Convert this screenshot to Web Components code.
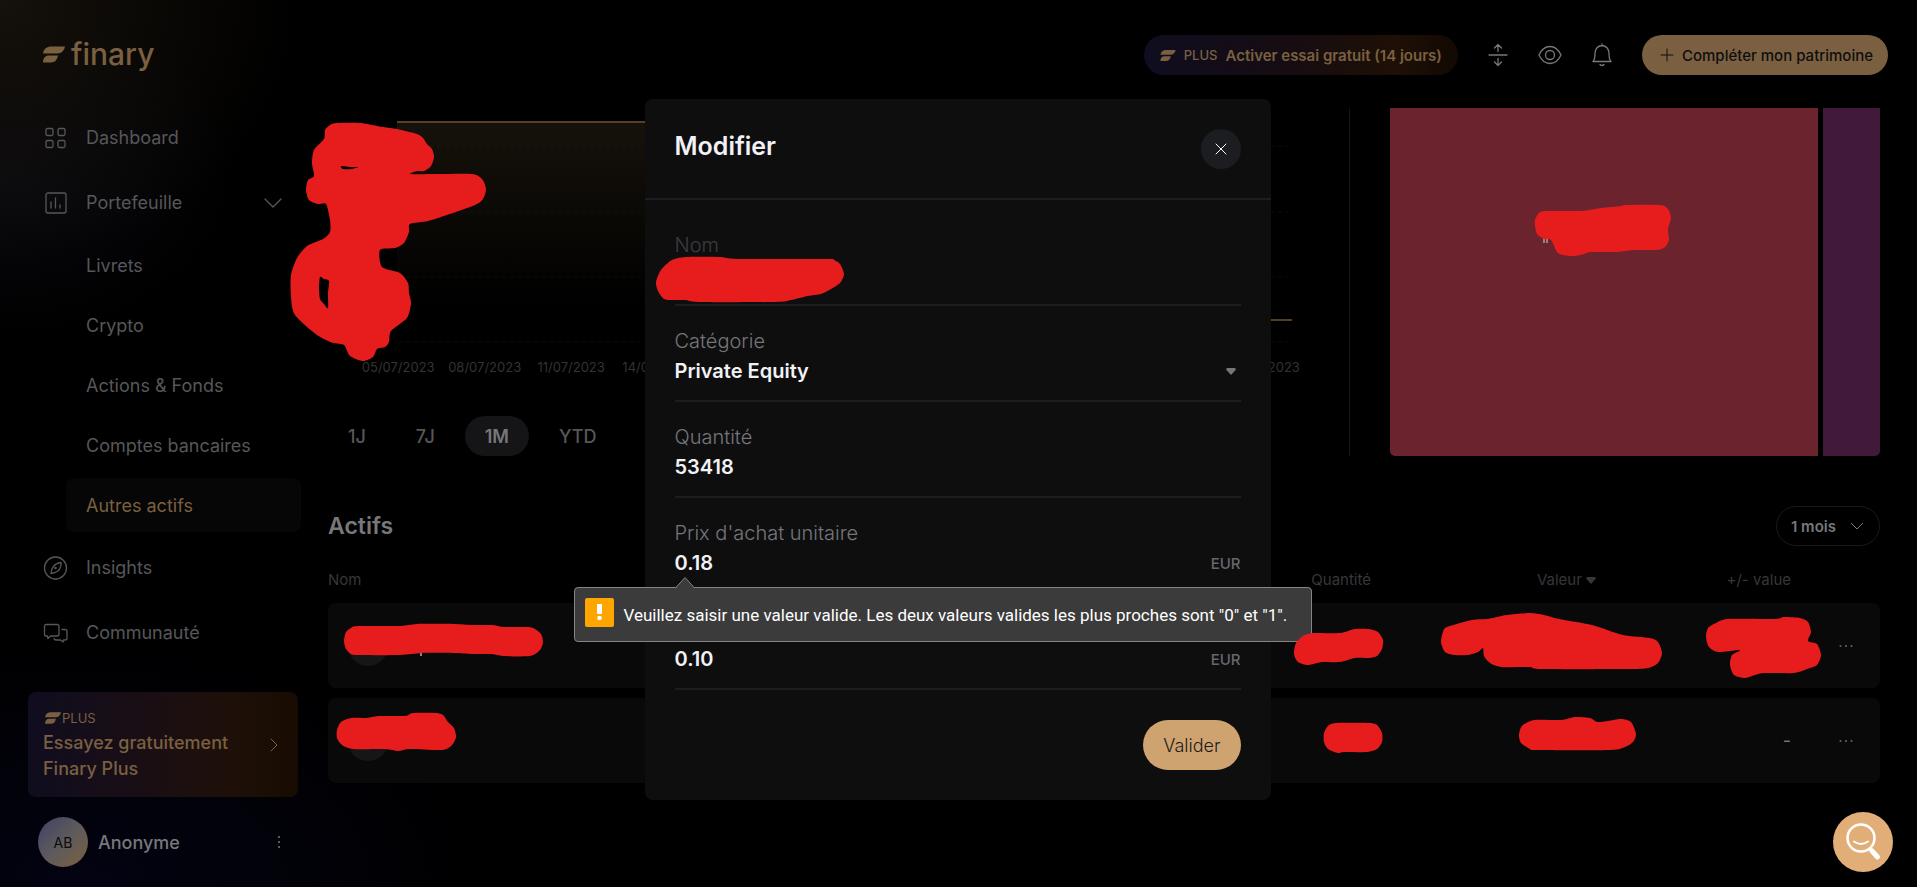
<!DOCTYPE html>
<html lang="fr">
<head>
<meta charset="utf-8">
<meta name="viewport" content="width=device-width, initial-scale=1">
<title>Finary</title>
<style>
  body {
    margin: 0;
    background: #000;
    color: #56575a;
    font-family: Inter, "Liberation Sans", sans-serif;
    font-size: 18px;
  }
</style>
</head>
<body>
<finary-app></finary-app>

<script>
const FLAG = `<path d="M7 0h15q-1 6.500-8 7H0Q1 .5 7 0z"/><path d="M5 9h10q-1 6.500-7 7H0q0-6 5-7z"/>`;

// shared base: one shadow root per element, filled from render()
class BaseElement extends HTMLElement {
  constructor() {
    super();
    this.shadowDOM = this.attachShadow({ mode: "open" });
  }

  connectedCallback() {
    this.shadowDOM.innerHTML = `
    <style>
    * { box-sizing: border-box; }
    button, input, select {
      font: inherit;
      color: inherit;
      background: none;
      border: 0;
      padding: 0;
      margin: 0;
    }
    button { cursor: pointer; }
    a { color: inherit; text-decoration: none; }
    svg { display: block; flex: none; }
    .line { fill: none; stroke: currentColor; stroke-linecap: round; stroke-linejoin: round; }
    </style>
    ${this.render()}`;
  }
}

class NavItem extends BaseElement {
  render() {
    return `
    <style>
    :host { display: block; }
    a {
      display: flex;
      align-items: center;
      gap: 18px;
      height: 59px;
      padding: 0 19px 0 14px;
    }
    :host([sub]) a {
      height: 54px;
      margin-left: 38px;
      padding: 0 20px;
      border-radius: 8px;
    }
    :host([active]) a { background: #060606; color: #7a6040; }
    .label { flex: 1; }
    </style>
    <a href="#"><slot name="icon"></slot><span class="label"><slot></slot></span><slot name="end"></slot></a>`;
  }
}

class PlusCard extends BaseElement {
  render() {
    return `
    <style>
    :host { display: block; margin: 30px 6px 0 0; }
    a {
      display: flex;
      align-items: center;
      justify-content: space-between;
      height: 105px;
      padding: 0 20px 0 15px;
      border-radius: 8px;
      color: #7a6040;
      background: linear-gradient(90deg, #100d1f, #1a0e14 45%, #1e1008 75%, #180c02);
    }
    .tag { display: flex; align-items: center; gap: 1px; margin: 2px 0 4px 2px; font-size: 13px; line-height: 16px; }
    .title { font-size: 18px; line-height: 26px; font-weight: 500; }
    </style>
    <a href="#">
      <div>
        <div class="tag"><svg width="16" height="12" viewBox="0 0 22 16" fill="currentColor">${FLAG}</svg>PLUS</div>
        <div class="title">Essayez gratuitement<br>Finary Plus</div>
      </div>
      <svg class="line" width="8" height="14"><path d="M1 1l6 6-6 6"/></svg>
    </a>`;
  }
}

class UserBadge extends BaseElement {
  render() {
    return `
    <style>
    :host { display: flex; align-items: center; gap: 10px; margin: 20px 21px 0 10px; }
    .avatar {
      display: grid;
      place-items: center;
      width: 50px;
      height: 50px;
      border-radius: 50%;
      color: #0b0b0e;
      font-size: 14px;
      background: linear-gradient(135deg, #3c4266, #5e5a5c 50%, #7a6040);
    }
    .name { flex: 1; font-weight: 500; color: #77787b; }
    button { width: 8px; }
    </style>
    <span class="avatar">AB</span>
    <span class="name">Anonyme</span>
    <button aria-label="Menu du compte"><svg width="8" height="14" fill="#77787b"><circle cx="4" cy="2" r="1"/><circle cx="4" cy="7" r="1"/><circle cx="4" cy="12" r="1"/></svg></button>`;
  }
}

class SideBar extends BaseElement {
  render() {
    return `
    <style>
    :host { display: block; padding: 0 0 16px 28px; }
    .logo {
      display: flex;
      align-items: center;
      gap: 6px;
      height: 108px;
      padding: 0 0 0 15px;
      color: #7a6040;
      font-size: 30px;
      font-weight: 500;
    }
    nav { display: flex; flex-direction: column; gap: 6px; margin-right: 3px; }
    nav .line { stroke-width: 1.300; }
    </style>
    <a class="logo" href="#"><svg width="22" height="17" viewBox="0 0 22 16" fill="currentColor">${FLAG}</svg>finary</a>
    <nav>
      <nav-item><svg class="line" slot="icon" width="26" height="24"><rect x="4" y="2.500" width="7" height="7" rx="1.500"/><rect x="16" y="2.500" width="7" height="7" rx="1.500"/><rect x="4" y="14.500" width="7" height="7" rx="1.500"/><rect x="16" y="14.500" width="7" height="7" rx="1.500"/></svg>Dashboard</nav-item>
      <nav-item><svg class="line" slot="icon" width="26" height="24"><rect x="4" y="2" width="20" height="20" rx="2"/><path d="M9 11v6M13.500 7v10M18 14v3"/></svg>Portefeuille<svg class="line" slot="end" width="18" height="10"><path d="M1 1l8 8 8-8"/></svg></nav-item>
      <nav-item sub>Livrets</nav-item>
      <nav-item sub>Crypto</nav-item>
      <nav-item sub>Actions &amp; Fonds</nav-item>
      <nav-item sub>Comptes bancaires</nav-item>
      <nav-item sub active>Autres actifs</nav-item>
      <nav-item><svg class="line" slot="icon" width="26" height="24"><circle cx="13.500" cy="12" r="11"/><path d="M19 6.500q.5 5-3 8.500-3 2-7 2.500.3-4.500 2.800-7.500T19 6.500z"/><circle cx="13.500" cy="12" r=".6"/></svg>Insights</nav-item>
      <nav-item><svg class="line" slot="icon" width="26" height="24"><path d="M4 3.500h11q2 0 2 2V13q0 2-2 2H8.500L6 17.500 5.500 15H4q-1.500 0-1.500-2V5.500q0-2 1.500-2z"/><path d="M20 8.500h3q2 0 2 2V17q0 2-2 2h-1.500l-.5 2-2.500-2H14q-1.500 0-2-1.500"/></svg>Communauté</nav-item>
    </nav>
    <plus-card></plus-card>
    <user-badge></user-badge>`;
  }
}

class TopBar extends BaseElement {
  render() {
    return `
    <style>
    :host {
      display: flex;
      align-items: center;
      justify-content: flex-end;
      height: 110px;
      margin-bottom: -2px;
      font-size: 15px;
      font-weight: 500;
    }
    .pill { display: flex; align-items: center; height: 40px; border-radius: 20px; }
    .trial {
      gap: 8px;
      padding: 0 16px;
      margin-right: 28px;
      color: #7a6040;
      background: linear-gradient(90deg, #0f0d20, #160c12 45%, #1e1006 80%, #120903);
      font-weight: 600;
    }
    .trial small { font-size: 13px; font-weight: 500; }
    .icons { display: flex; gap: 28px; margin-right: 28px; color: #77787b; }
    .icons svg { stroke-width: 1.300; }
    .add { gap: 8px; padding: 0 15px 0 18px; background: #7a6040; color: #0e0e10; }
    </style>
    <button class="pill trial"><svg width="16" height="11" viewBox="0 0 22 16" fill="currentColor">${FLAG}</svg><small>PLUS</small>Activer essai gratuit (14 jours)</button>
    <div class="icons">
      <button aria-label="Réduire"><svg class="line" width="24" height="24"><path d="M3 12h18M12 1.500v7M8.500 5L12 1.500 15.500 5M12 15.500v7M8.500 19l3.500 3.500 3.500-3.500"/></svg></button>
      <button aria-label="Masquer les montants"><svg class="line" width="24" height="24"><path d="M1 12Q5 3.500 12 3.500T23 12q-4 8.500-11 8.500T1 12z"/><circle cx="12" cy="12" r="4.500"/></svg></button>
      <button aria-label="Notifications"><svg class="line" width="24" height="24"><path d="M3 18.500q2-2 2-8 .5-7.500 7-8 6.500.5 7 8 0 6 2 8zM10 21.500q2 2 4 0M12 1v1.500"/></svg></button>
    </div>
    <button class="pill add"><svg class="line" width="14" height="14"><path d="M7 1v12M1 7h12"/></svg>Compléter mon patrimoine</button>`;
  }
}

class HistoryChart extends BaseElement {
  render() {
    const dates = ["05/07/2023", "08/07/2023", "11/07/2023", "14/07/2023", "17/07/2023", "20/07/2023", "23/07/2023", "26/07/2023", "29/07/2023", "01/08/2023", "04/08/2023"];
    const ranges = ["1J", "7J", "1M", "YTD"];
    return `
    <style>
    :host { display: flex; flex-direction: column; height: 348px; }
    .plot { display: block; width: 100%; height: 244px; }
    .dates {
      display: flex;
      padding: 7px 0 0 27px;
      margin-right: -14px;
      font-size: 13px;
      line-height: 16px;
      text-align: center;
      color: #323335;
    }
    .dates span { flex: 1; }
    .ranges { display: flex; gap: 10px; margin-top: auto; font-weight: 500; }
    .ranges button { height: 40px; padding: 0 20px; border-radius: 20px; }
    .ranges .on { background: #151517; color: #77787b; font-weight: 600; }
    </style>
    <svg class="plot" viewBox="0 0 964 244" preserveAspectRatio="none">
      <defs><linearGradient id="fade" x2="0" y2="1"><stop stop-color="#16120b"/><stop offset=".8" stop-color="#000"/></linearGradient></defs>
      <path fill="url(#fade)" d="M69 14h600v198h295v32H69z"/>
      <path d="M69 38h895M69 104h895M69 169h895M69 234h895" stroke="#fff" stroke-opacity=".04" stroke-dasharray="4 4"/>
      <path d="M69 14h600v198h295" fill="none" stroke="#544024" stroke-width="2"/>
    </svg>
    <div class="dates">${dates.map((d) => `<span>${d}</span>`).join("")}</div>
    <div class="ranges">${ranges.map((r) => `<button${r === "1M" ? ' class="on"' : ""}>${r}</button>`).join("")}</div>`;
  }
}

class TreeMap extends BaseElement {
  render() {
    return `
    <style>
    :host { display: block; }
    .tiles { display: flex; gap: 5px; height: 348px; border-radius: 0 0 5px 5px; overflow: hidden; }
    .red { flex: 1; background: #6b232e; }
    .purple { flex: 0 0 57px; background: #41193b; }
    </style>
    <div class="tiles"><div class="red"></div><div class="purple"></div></div>`;
  }
}

class AssetTable extends BaseElement {
  render() {
    const row = (gain) => `
      <tr>
        <td><span class="avatar"></span></td><td></td><td></td><td>${gain}</td>
        <td><button aria-label="Options"><svg width="14" height="4" fill="#66676a"><circle cx="1.500" cy="2" r="1"/><circle cx="7" cy="2" r="1"/><circle cx="12.500" cy="2" r="1"/></svg></button></td>
      </tr>`;
    return `
    <style>
    :host { display: block; margin-top: 50px; }
    header { display: flex; align-items: center; justify-content: space-between; height: 40px; }
    h2 { margin: 0; font-size: 23px; font-weight: 600; color: #77787b; }
    .period { position: relative; display: flex; align-items: center; color: #77787b; }
    select {
      appearance: none;
      width: 104px;
      height: 40px;
      padding: 0 14px;
      border: 1px solid #1a1a1b;
      border-radius: 20px;
      font-size: 15px;
      font-weight: 600;
    }
    .period svg { position: absolute; right: 17px; pointer-events: none; }
    table {
      width: 100%;
      margin-top: 10px;
      border-collapse: separate;
      border-spacing: 0 10px;
      table-layout: fixed;
    }
    th {
      height: 27px;
      padding: 0;
      font-size: 15px;
      font-weight: 400;
      text-align: right;
      color: #36373a;
    }
    th:first-child, td:first-child { text-align: left; }
    th svg { display: inline-block; vertical-align: 1px; }
    td { height: 85px; padding: 0; text-align: right; background: #090909; color: #77787b; }
    td:first-child { border-radius: 8px 0 0 8px; padding-left: 20px; }
    td:last-child { border-radius: 0 8px 8px 0; padding-right: 27px; }
    td button svg { margin-bottom: 4px; }
    .avatar { display: block; width: 40px; height: 40px; border-radius: 50%; background: #141618; }
    </style>
    <header>
      <h2>Actifs</h2>
      <div class="period">
        <select aria-label="Période"><option>1 mois</option></select>
        <svg class="line" width="12" height="8"><path d="M0 1l6 6 6-6"/></svg>
      </div>
    </header>
    <table>
      <colgroup><col><col style="width:200px"><col style="width:225px"><col style="width:195px"><col style="width:89px"></colgroup>
      <thead><tr><th>Nom</th><th>Quantité</th><th>Valeur <svg width="10" height="7" fill="currentColor"><path d="M1 0h8l1 1.500L5 7 0 1.500z"/></svg></th><th>+/- value</th><th></th></tr></thead>
      <tbody>${row("")}${row("-")}</tbody>
    </table>`;
  }
}

class FormField extends BaseElement {
  render() {
    const label = this.getAttribute("label");
    const value = this.getAttribute("value") || "";
    const unit = this.getAttribute("unit");
    // a field with "name" only keeps its label for assistive tech
    const name = label ? "" : ` aria-label="${this.getAttribute("name")}"`;
    const control = this.hasAttribute("select")
      ? `<select id="control"${name}><option>${value}</option></select>
         <svg class="caret" width="10" height="7" fill="#75767c"><path d="M1 0h8l1 1.500L5 7 0 1.500z"/></svg>`
      : `<input id="control"${name} value="${value}">`;
    return `
    <style>
    :host { display: block; height: 96px; border-bottom: 2px solid #1c1d20; color: #f1f1f6; }
    :host([dim]) label { color: #3b3c42; }
    .field { display: flex; flex-direction: column; justify-content: flex-end; height: 80px; }
    label { font-size: 20px; line-height: 30px; font-weight: 300; color: #75767c; }
    .row { display: flex; align-items: center; height: 30px; }
    input, select { flex: 1; min-width: 0; height: 30px; font-size: 20px; font-weight: 600; outline: 0; appearance: none; }
    .caret { margin-right: 5px; }
    .unit { font-size: 15px; font-weight: 500; color: #66676d; }
    </style>
    <div class="field">
      ${label ? `<label for="control">${label}</label>` : ""}
      <div class="row">${control}${unit ? `<span class="unit">${unit}</span>` : ""}</div>
    </div>`;
  }
}

class EditDialog extends BaseElement {
  render() {
    return `
    <style>
    :host {
      display: block;
      width: 626px;
      border-radius: 8px;
      background: #0e0e0f;
    }
    header {
      display: flex;
      align-items: center;
      justify-content: space-between;
      height: 101px;
      padding: 0 30px;
      border-bottom: 2px solid #1c1d20;
    }
    h1 { margin: 0; font-size: 25px; line-height: 36px; padding-bottom: 6px; font-weight: 600; color: #f1f1f6; }
    .close { display: grid; place-items: center; width: 40px; height: 40px; border-radius: 50%; background: #1c1d20; color: #fff; }
    form { padding: 10px 30px 30px; }
    .actions { display: flex; justify-content: flex-end; margin-top: 30px; }
    .submit { height: 50px; padding: 0 20px; border-radius: 25px; background: #cea370; color: #1c1a1a; font-size: 18px; font-weight: 300; }
    </style>
    <header>
      <h1>Modifier</h1>
      <button class="close" aria-label="Fermer"><svg class="line" width="12" height="12"><path d="M1 1l10 10M11 1L1 11"/></svg></button>
    </header>
    <form>
      <form-field label="Nom" dim></form-field>
      <form-field label="Catégorie" value="Private Equity" select></form-field>
      <form-field label="Quantité" value="53418"></form-field>
      <form-field label="Prix d'achat unitaire" value="0.18" unit="EUR"></form-field>
      <form-field name="Prix actuel" value="0.10" unit="EUR"></form-field>
      <div class="actions"><button class="submit" type="button">Valider</button></div>
    </form>`;
  }
}

class ValidationTip extends BaseElement {
  render() {
    return `
    <style>
    :host {
      display: flex;
      align-items: center;
      gap: 10px;
      box-sizing: border-box;
      min-width: 738px;
      height: 55px;
      padding: 0 10px;
      border: 1px solid #858585;
      border-radius: 4px;
      background: #3b3b3b;
      color: #fff;
      font-family: Roboto, "Noto Sans", sans-serif;
      font-size: 17px;
      white-space: nowrap;
    }
    .arrow { position: absolute; left: 100px; top: -11px; }
    .mark { margin-bottom: 4px; }
    </style>
    <svg class="arrow" width="20" height="12"><path d="M0 11.500L10 .5l10 11" fill="#3b3b3b" stroke="#858585"/></svg>
    <svg class="mark" width="29" height="29"><rect width="29" height="29" rx="2" fill="#ffa500"/><path d="M12 6h5v10h-5z" fill="#fff"/><circle cx="14.500" cy="20" r="2.300" fill="#fff"/></svg>
    <span><slot></slot></span>`;
  }
}

// hand-drawn red strokes that hide the private amounts
class RedactionInk extends BaseElement {
  // closed Catmull-Rom curve through the outline points
  smooth(list) {
    const n = list.length / 2;
    const p = (i) => [list[((i + n) % n) * 2], list[((i + n) % n) * 2 + 1]];
    let d = `M${p(0)}`;
    for (let i = 0; i < n; i++) {
      const [a, b, c, e] = [p(i - 1), p(i), p(i + 1), p(i + 2)];
      d += `C${b[0] + (c[0] - a[0]) / 8},${b[1] + (c[1] - a[1]) / 8} ${c[0] - (e[0] - b[0]) / 8},${c[1] - (e[1] - b[1]) / 8} ${c}`;
    }
    return d + "Z";
  }

  render() {
    const chart = [
      [337,123, 360,123, 383,127, 397,129, 417,134, 423,138, 427,144, 432,149, 434,157, 431,166, 424,171, 417,171, 411,174, 440,174, 472,174, 482,179, 486,189, 483,199, 475,205, 447,215, 428,221, 410,224, 409,232, 404,243, 395,248, 380,250, 382,267, 400,273, 408,283, 409,293, 411,303, 407,318, 391,331, 389,342, 385,347, 377,349, 373,357, 363,361, 350,356, 344,345, 333,343, 317,335, 295,315, 291,297, 291,275, 297,258, 307,246, 323,239, 330,232, 330,220, 326,204, 318,204, 309,200, 306,190, 308,180, 314,176, 312,163, 314,150, 324,139, 325,130, 330,125],
      [320,277, 324,279, 329,281, 328,293, 328,308, 324,304, 320,299, 319,288],
      [341,166, 350,167, 358,167, 352,169, 343,169],
    ];
    const blots = [
      [1546,211, 1581,211, 1601,208, 1621,206, 1626,205, 1660,205, 1668,209, 1671,218, 1668,229, 1669,240, 1665,247, 1657,250, 1633,250, 1617,252, 1591,252, 1581,255, 1570,256, 1558,253, 1551,240, 1544,239, 1537,234, 1535,226, 1535,220, 1539,213],
      [686,257, 720,257, 739,259, 827,259, 834,260, 840,264, 844,274, 840,283, 831,289, 821,294, 808,296, 791,300, 775,302, 699,302, 686,300, 672,300, 664,299, 658,291, 656,282, 661,270, 672,260],
      [358,626, 400,626, 417,624, 453,624, 473,625, 493,625, 503,627, 528,627, 535,629, 541,634, 543,642, 540,650, 530,656, 503,656, 492,654, 473,654, 453,653, 422,653, 400,655, 358,655, 351,654, 346,649, 344,641, 346,632, 351,628],
      [351,718, 367,718, 378,716, 405,716, 413,713, 436,713, 443,715, 448,722, 454,728, 456,737, 452,745, 442,750, 410,749, 398,751, 385,749, 353,749, 342,745, 337,738, 337,730, 341,722],
      [1313,633, 1340,633, 1355,629, 1369,629, 1378,632, 1383,640, 1382,649, 1377,656, 1369,658, 1355,658, 1340,662, 1322,662, 1308,665, 1298,662, 1294,654, 1296,643, 1303,636],
      [1447,627, 1472,620, 1487,619, 1507,615, 1530,613, 1544,615, 1559,619, 1592,625, 1623,635, 1650,638, 1658,642, 1662,653, 1658,663, 1648,668, 1629,669, 1540,669, 1530,667, 1501,667, 1490,663, 1484,656, 1483,648, 1478,652, 1468,655, 1454,655, 1445,652, 1441,642, 1443,632],
      [1728,619, 1775,619, 1784,617, 1800,618, 1808,622, 1811,632, 1808,641, 1817,644, 1821,655, 1817,665, 1807,669, 1794,673, 1765,673, 1755,675, 1745,678, 1734,675, 1730,665, 1732,655, 1740,650, 1718,652, 1709,647, 1706,637, 1708,628, 1716,623],
      [1336,723, 1369,723, 1377,725, 1382,733, 1382,742, 1377,749, 1367,752, 1344,752, 1338,753, 1328,749, 1324,742, 1324,733, 1328,726],
      [1534,720, 1561,720, 1575,717, 1590,718, 1597,722, 1608,721, 1621,719, 1631,722, 1636,734, 1633,742, 1625,747, 1610,750, 1538,750, 1530,749, 1521,743, 1519,735, 1522,726],
    ];
    return `
    <style>
    :host { position: absolute; top: 0; left: 0; width: 100%; pointer-events: none; }
    svg { width: 100%; height: auto; }
    </style>
    <svg viewBox="0 0 1917 887">
      <path fill="#8d8588" d="M1543 236h2v7h-2zM1546 236h2v7h-2zM420 650h2v6h-2z"/>
      <path fill="#e71d1d" fill-rule="evenodd" d="${chart.map(this.smooth).join("")}"/>
      <path fill="#e71d1d" d="${blots.map(this.smooth).join("")}"/>
    </svg>`;
  }
}

class HelpButton extends BaseElement {
  render() {
    return `
    <style>
    :host { position: fixed; right: 24px; bottom: 15px; }
    button { display: grid; place-items: center; width: 60px; height: 60px; border-radius: 50%; background: #e2ae78; }
    </style>
    <button aria-label="Aide"><svg class="line" width="60" height="60" style="color:#fff">
      <circle cx="28" cy="26" r="13.500" stroke-width="2.500"/><path d="M21 29.500q7 5 14 0" stroke-width="2"/><path d="M37 37l2 2" stroke-width="3"/><path d="M39 39l5.500 6" stroke-width="5"/>
    </svg></button>`;
  }
}

class FinaryApp extends BaseElement {
  render() {
    return `
    <style>
    :host {
      display: grid;
      grid-template-columns: 304px minmax(0, 1fr);
      position: relative;
      min-height: 100vh;
      background:
        radial-gradient(ellipse 300px 260px at 0 0, #15110b, transparent),
        radial-gradient(ellipse 240px 170px at 0 170px, #0a0a10, transparent),
        radial-gradient(ellipse 420px 260px at 80px 100%, #030312, transparent),
        #000;
    }
    main { padding: 0 37px 0 24px; }
    top-bar { margin-right: -8px; }
    .charts { display: grid; grid-template-columns: minmax(0, 1022px) minmax(0, 1fr); }
    .left { padding-right: 57px; border-right: 1px solid #151516; }
    .right { padding-left: 40px; }
    edit-dialog { position: absolute; top: 99px; left: calc(50% - 314px); }
    validation-tip { position: absolute; top: 587px; left: calc(50% - 385px); }
    </style>
    <side-bar></side-bar>
    <main>
      <top-bar></top-bar>
      <div class="charts">
        <history-chart class="left"></history-chart>
        <tree-map class="right"></tree-map>
      </div>
      <asset-table></asset-table>
    </main>
    <edit-dialog role="dialog" aria-label="Modifier"></edit-dialog>
    <validation-tip role="alert">Veuillez saisir une valeur valide. Les deux valeurs valides les plus proches sont "0" et "1".</validation-tip>
    <redaction-ink aria-hidden="true"></redaction-ink>
    <help-button></help-button>`;
  }
}

customElements.define("nav-item", NavItem);
customElements.define("plus-card", PlusCard);
customElements.define("user-badge", UserBadge);
customElements.define("side-bar", SideBar);
customElements.define("top-bar", TopBar);
customElements.define("history-chart", HistoryChart);
customElements.define("tree-map", TreeMap);
customElements.define("asset-table", AssetTable);
customElements.define("form-field", FormField);
customElements.define("edit-dialog", EditDialog);
customElements.define("validation-tip", ValidationTip);
customElements.define("redaction-ink", RedactionInk);
customElements.define("help-button", HelpButton);
customElements.define("finary-app", FinaryApp);
</script>
</body>
</html>
